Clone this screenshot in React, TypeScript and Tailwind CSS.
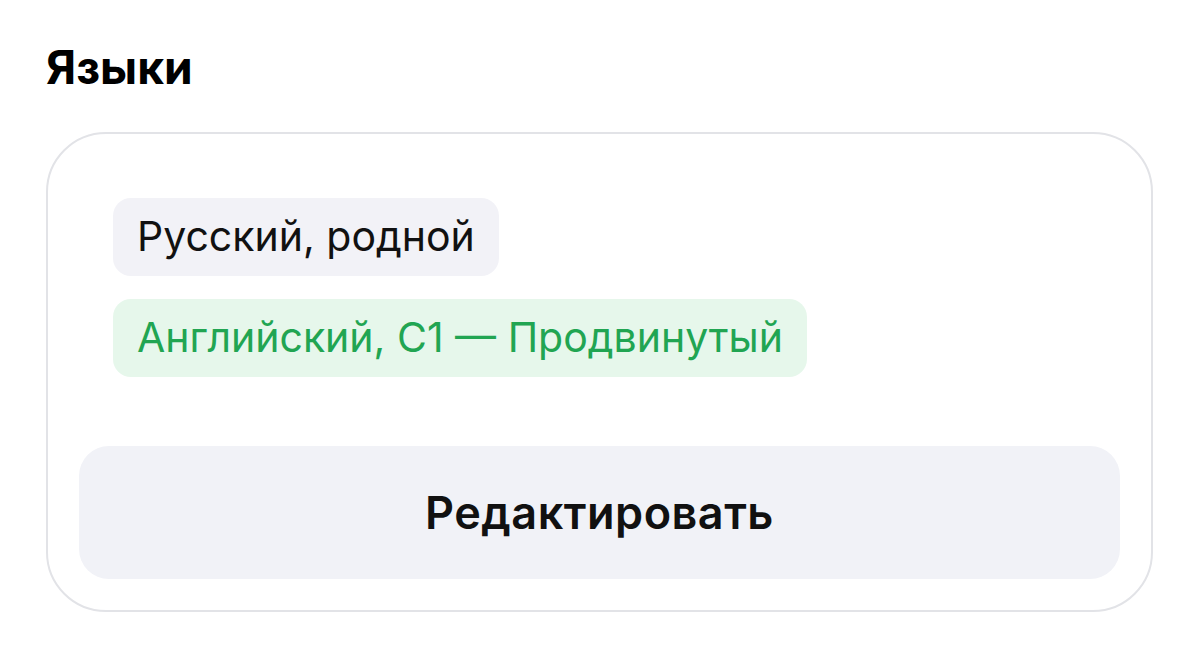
export default function App() {
  return (
    <div className="min-h-[650px] bg-white pl-[46px] pr-[46px] pt-[44px]" style={{ fontFamily: 'Inter, "Liberation Sans", Arial, sans-serif' }}>
      <h2 className="text-[46px] font-bold leading-[46px] text-black">Языки</h2>
      <div className="mt-[42px] w-[1107px] rounded-[60px] border-2 border-[#e2e3e7] px-[31px] pt-[64px] pb-[31px]">
        <div className="flex flex-col items-start gap-[23px] pl-[34px]">
          <span className="flex h-[78px] items-center rounded-[18px] bg-[#f2f2f7] px-[24px] text-[41px] text-[#111]">
            Русский, родной
          </span>
          <span className="flex h-[78px] items-center rounded-[18px] bg-[#e6f7eb] px-[24px] text-[41px] text-[#21a552]">
            Английский, C1 — Продвинутый
          </span>
        </div>
        <button className="mt-[69px] flex h-[133px] w-full items-center justify-center rounded-[30px] bg-[#f1f2f7] text-[45px] font-semibold tracking-[0.5px] text-[#111]">
          Редактировать
        </button>
      </div>
    </div>
  );
}
